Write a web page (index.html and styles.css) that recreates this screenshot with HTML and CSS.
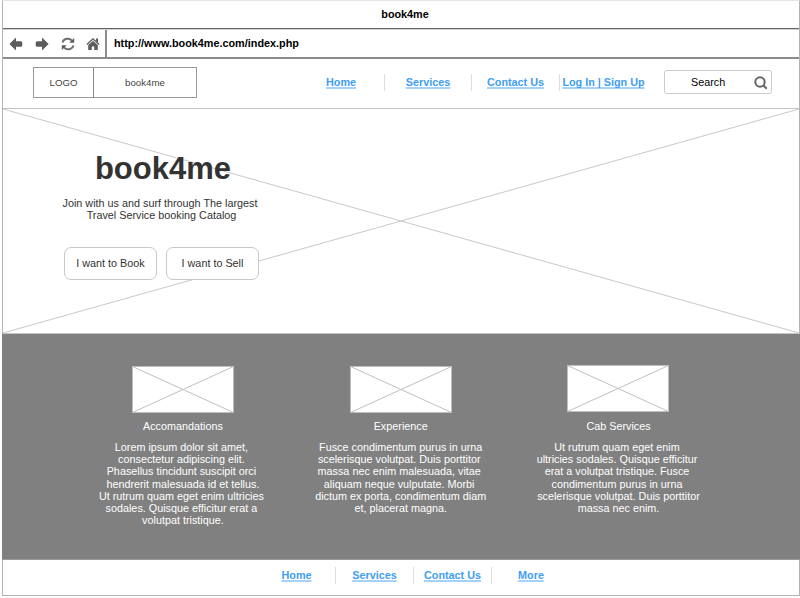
FILE: index.html
```html
<!DOCTYPE html>
<html lang="en">
<head>
<meta charset="utf-8">
<title>book4me</title>
<link rel="stylesheet" href="styles.css">
</head>
<body>
<div class="window">
  <div class="titlebar">book4me</div>
  <div class="toolbar">
    <div class="controls">
      <svg width="14" height="14" viewBox="0 0 14 14"><path d="M.4 7 7 .6V4.200H11.800Q13.300 4.200 13.300 5.700V8.300Q13.300 9.800 11.800 9.800H7V13.400Z"/></svg>
      <svg width="14" height="14" viewBox="0 0 14 14"><path d="M13.600 7 7 .6V4.200H2.200Q.7 4.200.7 5.700V8.300Q.7 9.800 2.200 9.800H7V13.400Z"/></svg>
      <svg width="14" height="14" viewBox="0 0 14 14"><path class="stroke" d="M1.500 5.500A5.500 5.200 0 0 1 11 3.600M12.500 8.500A5.500 5.200 0 0 1 3 10.400"/><path d="M13.200.9V5.800H8.200ZM.8 13.100V8.200H5.800Z"/></svg>
      <svg width="14" height="14" viewBox="0 0 14 14"><path class="roof" d="M.8 7.500 7 2 13.200 7.500"/><path d="M10 1.600H12V6L10 4ZM7 4 11.800 8.100V12.900H8.200V9.500H5.800V12.900H2.200V8.100Z"/></svg>
    </div>
    <div class="address">http://www.book4me.com/index.php</div>
  </div>
  <header class="header">
    <div class="brand"><span>LOGO</span><span>book4me</span></div>
    <nav class="nav">
      <a href="#">Home</a><a href="#">Services</a><a href="#">Contact Us</a><a href="#">Log In | Sign Up</a>
    </nav>
    <div class="search"><span>Search</span>
      <svg width="14" height="14" viewBox="0 0 14 14"><circle cx="6" cy="6" r="4.700"/><path d="M9.300 9.300 12.700 12.700"/></svg>
    </div>
  </header>
  <section class="hero">
    <svg class="cross" viewBox="0 0 797 225" preserveAspectRatio="none"><path d="M0 0 797 225M0 225 797 0"/></svg>
    <div class="intro">
      <h1>book4me</h1>
      <p>Join with us and surf through The largest&nbsp;<br>Travel Service booking Catalog</p>
      <div class="actions"><button>I want to Book</button><button>I want to Sell</button></div>
    </div>
  </section>
  <section class="features">
    <article>
      <svg class="thumb" viewBox="0 0 102 47"><rect x=".5" y=".5" width="101" height="46"/><path d="M.5.5 101.500 46.500M.5 46.500 101.500.5"/></svg>
      <h2>Accomandations</h2>
      <p>Lorem ipsum dolor sit amet,&nbsp;<br>consectetur adipiscing elit.&nbsp;<br>Phasellus tincidunt suscipit orci&nbsp;<br>hendrerit malesuada id et tellus.<br>Ut rutrum quam eget enim ultricies&nbsp;<br>sodales. Quisque efficitur erat a&nbsp;<br>volutpat tristique.</p>
    </article>
    <article>
      <svg class="thumb" viewBox="0 0 102 47"><rect x=".5" y=".5" width="101" height="46"/><path d="M.5.5 101.500 46.500M.5 46.500 101.500.5"/></svg>
      <h2>Experience</h2>
      <p>Fusce condimentum purus in urna<br>scelerisque volutpat. Duis porttitor&nbsp;<br>massa nec enim malesuada, vitae&nbsp;<br>aliquam neque vulputate. Morbi&nbsp;<br>dictum ex porta, condimentum diam<br>et, placerat magna.</p>
    </article>
    <article class="raised">
      <svg class="thumb" viewBox="0 0 102 47"><rect x=".5" y=".5" width="101" height="46"/><path d="M.5.5 101.500 46.500M.5 46.500 101.500.5"/></svg>
      <h2>Cab Services</h2>
      <p>Ut rutrum quam eget enim&nbsp;<br>ultricies sodales. Quisque efficitur&nbsp;<br>erat a volutpat tristique. Fusce&nbsp;<br>condimentum purus in urna&nbsp;<br>scelerisque volutpat. Duis porttitor<br>massa nec enim.</p>
    </article>
  </section>
  <footer class="footer">
    <nav class="nav"><a href="#">Home</a><a href="#">Services</a><a href="#">Contact Us</a><a href="#">More</a></nav>
  </footer>
</div>
</body>
</html>
```
FILE: styles.css
```css
* { box-sizing: border-box; margin: 0; }
body {
  height: 598px;
  padding-left: 2px;
  overflow: hidden;
  background: #fff;
  color: #000;
  font: 10.8px/12.15px "Liberation Sans", Arial, sans-serif;
}
.window {
  width: 798px;
  height: 596px;
  border: 1px solid #b3b3b3;
  border-top-color: #e6e6e6;
}
.titlebar {
  height: 28px;
  border-bottom: 1px solid #666;
  font-weight: bold;
  line-height: 27px;
  text-align: center;
  padding-left: 8px;
}
.toolbar {
  display: flex;
  height: 30px;
  border-top: 1px solid #d0d0d0;
  border-bottom: 2px solid #8c8c8c;
}
.controls {
  display: flex;
  align-items: center;
  gap: 11.8px;
  width: 104px;
  padding-left: 6px;
  border-right: 2px solid #8c8c8c;
}
.controls svg { flex: none; fill: #5c5c5c; }
.controls .stroke { fill: none; stroke: #707070; stroke-width: 2; }
.controls .roof { fill: none; stroke: #666; stroke-width: 1.5; }
.address { padding-left: 7px; font-weight: bold; font-size: 10.83px; line-height: 27px; }
.header {
  display: flex;
  align-items: flex-start;
  height: 50px;
  border-bottom: 1px solid #c4c4c4;
}
.brand {
  display: grid;
  grid-template-columns: 60px 102px;
  width: 164px;
  height: 31px;
  margin: 8px 0 0 30px;
  border: 1px solid #999;
  color: #444;
  font-size: 9.7px;
  line-height: 30px;
  text-align: center;
}
.brand span:first-child { border-right: 1px solid #888; }
.nav { display: grid; font-weight: bold; text-align: center; }
.nav a {
  height: 17px;
  border-right: 1px solid #ddd;
  color: #3f9ef0;
  line-height: 17px;
  text-decoration: underline 2px #a5d2fa;
  text-underline-offset: 1px;
  text-decoration-skip-ink: none;
  white-space: nowrap;
}
.nav a:last-child { border: 0; }
.header .nav {
  grid-template-columns: 87px 87px 88px 87px;
  margin: 15px 0 0 101px;
}
.search {
  display: flex;
  justify-content: space-between;
  width: 108px;
  height: 24px;
  margin: 11px 0 0 17px;
  padding: 0 3px 0 26px;
  border: 1px solid #ccc;
  border-radius: 3px;
  line-height: 23px;
}
.search svg { margin-top: 4.5px; fill: none; stroke: #666; stroke-width: 2; }
.hero {
  position: relative;
  height: 225px;
  border-bottom: 1px solid #c4c4c4;
}
.cross {
  position: absolute;
  inset: 0;
  width: 100%;
  height: 100%;
  fill: none;
  stroke: #c8c8c8;
}
.intro { position: relative; width: 196px; margin-left: 60px; padding-top: 42px; color: #333; text-align: center; }
.intro h1 { margin-left: 4px; font-size: 31px; line-height: 36px; }
.intro p { margin: 10px -10px 0 -9px; }
.actions { display: flex; gap: 9px; margin: 25.3px -1px 0 1px; }
.actions button {
  width: 93px;
  height: 33px;
  flex: none;
  padding: 0;
  border: 1px solid #c8c8c8;
  border-radius: 7px;
  background: #fff;
  color: #333;
  font: inherit;
}
.features {
  display: grid;
  grid-template-columns: repeat(3, 217.8px);
  height: 226px;
  margin: 0 -1px;
  padding: 32px 0 0 72px;
  border-bottom: 1px solid #999;
  background: #808080;
  color: #fff;
  text-align: center;
}
.thumb { display: block; width: 102px; height: 47px; margin: 0 auto; fill: #fff; stroke: #bfbfbf; }
.features h2 { margin-top: 7px; font: inherit; }
.features p { margin-top: 9px; }
.raised .thumb { margin-top: -1px; margin-bottom: 8px; }
.footer .nav {
  grid-template-columns: 78px 78px 78px 78px;
  margin: 7px 0 0 255px;
}
```
